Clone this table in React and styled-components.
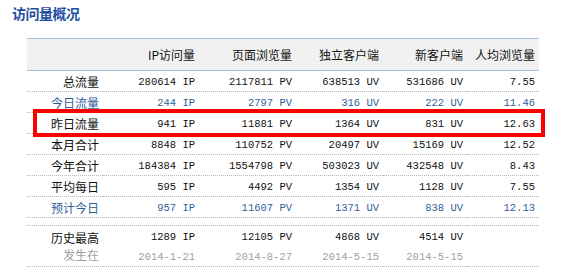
import React from 'react';
import styled, { createGlobalStyle } from 'styled-components';

const GlobalStyle = createGlobalStyle`
    body {
        margin: 0;
        background: #fff;
        font-family: "Noto Sans CJK SC", sans-serif;
    }
`

const Page = styled.div`
    position: relative;
    width: 564px;
    height: 268px;
    overflow: hidden;
`
const Title = styled.h2`
    margin: 0;
    padding: 4px 0 0 12px;
    height: 38px;
    box-sizing: border-box;
    font-size: 14px;
    line-height: 18px;
    font-weight: bold;
    color: #1f4f9f;
    letter-spacing: -0.5px;
`
const Table = styled.table`
    margin-left: 27px;
    border-collapse: collapse;
    table-layout: fixed;
    width: 512px;
    font-size: 12px;
`
const Row = styled.tr`
    height: ${props => props.h}px;
`
const Head = styled.th`
    height: 31px;
    padding: 0 4px;
    text-align: right;
    font-weight: normal;
    color: #111;
    background: #f1f1f1;
    border-top: 1px solid #a8c0e0;
    border-bottom: 1px solid #a8c0e0;
    white-space: nowrap;
`
const Cell = styled.td`
    padding: 0 4px;
    text-align: right;
    white-space: nowrap;
    line-height: ${props => props.tall ? '17px' : '15px'};
    color: ${props => props.blue ? '#2f5f9a' : '#111'};
    border-bottom: 1px dotted #b8b8b8;
`
const GapCell = styled.td`
    padding: 0;
    border-bottom: 1px dotted #b8b8b8;
`
const Num = styled.span`
    font-family: "Liberation Mono", monospace;
    font-size: 10.5px;
`
const Sub = styled.div`
    color: #a0a0a0;
    line-height: 17px;
`
const Highlight = styled.div`
    position: absolute;
    left: 33px;
    top: 109px;
    width: 512px;
    height: 28px;
    box-sizing: border-box;
    border: 4px solid #f00;
    pointer-events: none;
`

const heads = ['', 'IP访问量', '页面浏览量', '独立客户端', '新客户端', '人均浏览量'];
const widths = [76, 96, 97, 87, 84, 72];

const rows = [
    { label: '总流量', v: ['280614 IP', '2117811 PV', '638513 UV', '531686 UV', '7.55'] },
    { label: '今日流量', blue: true, v: ['244 IP', '2797 PV', '316 UV', '222 UV', '11.46'] },
    { label: '昨日流量', v: ['941 IP', '11881 PV', '1364 UV', '831 UV', '12.63'] },
    { label: '本月合计', v: ['8848 IP', '110752 PV', '20497 UV', '15169 UV', '12.52'] },
    { label: '今年合计', v: ['184384 IP', '1554798 PV', '503023 UV', '432548 UV', '8.43'] },
    { label: '平均每日', v: ['595 IP', '4492 PV', '1354 UV', '1128 UV', '7.55'] },
    { label: '预计今日', blue: true, v: ['957 IP', '11607 PV', '1371 UV', '838 UV', '12.13'] },
];

const best = [
    ['1289 IP', '2014-1-21'],
    ['12105 PV', '2014-8-27'],
    ['4868 UV', '2014-5-15'],
    ['4514 UV', '2014-5-15'],
];

const App = () => {
    return (
        <Page>
            <GlobalStyle />
            <Title>访问量概况</Title>
            <Table>
                <colgroup>
                    {widths.map((w, i) => <col key={i} style={{ width: w }} />)}
                </colgroup>
                <thead>
                    <tr>
                        {heads.map((h, i) => <Head key={i}>{h}</Head>)}
                    </tr>
                </thead>
                <tbody>
                    {rows.map((r, i) => (
                        <Row key={i} h={21}>
                            <Cell blue={r.blue}>{r.label}</Cell>
                            {r.v.map((v, j) => <Cell key={j} blue={r.blue}><Num>{v}</Num></Cell>)}
                        </Row>
                    ))}
                    <Row h={8}>
                        <GapCell colSpan={6} />
                    </Row>
                    <Row h={35}>
                        <Cell tall>
                            历史最高
                            <Sub>发生在</Sub>
                        </Cell>
                        {best.map((b, j) => (
                            <Cell key={j} tall>
                                <Num>{b[0]}</Num>
                                <Sub><Num>{b[1]}</Num></Sub>
                            </Cell>
                        ))}
                        <Cell tall />
                    </Row>
                </tbody>
            </Table>
            <Highlight />
        </Page>
    );
}

export default App;
